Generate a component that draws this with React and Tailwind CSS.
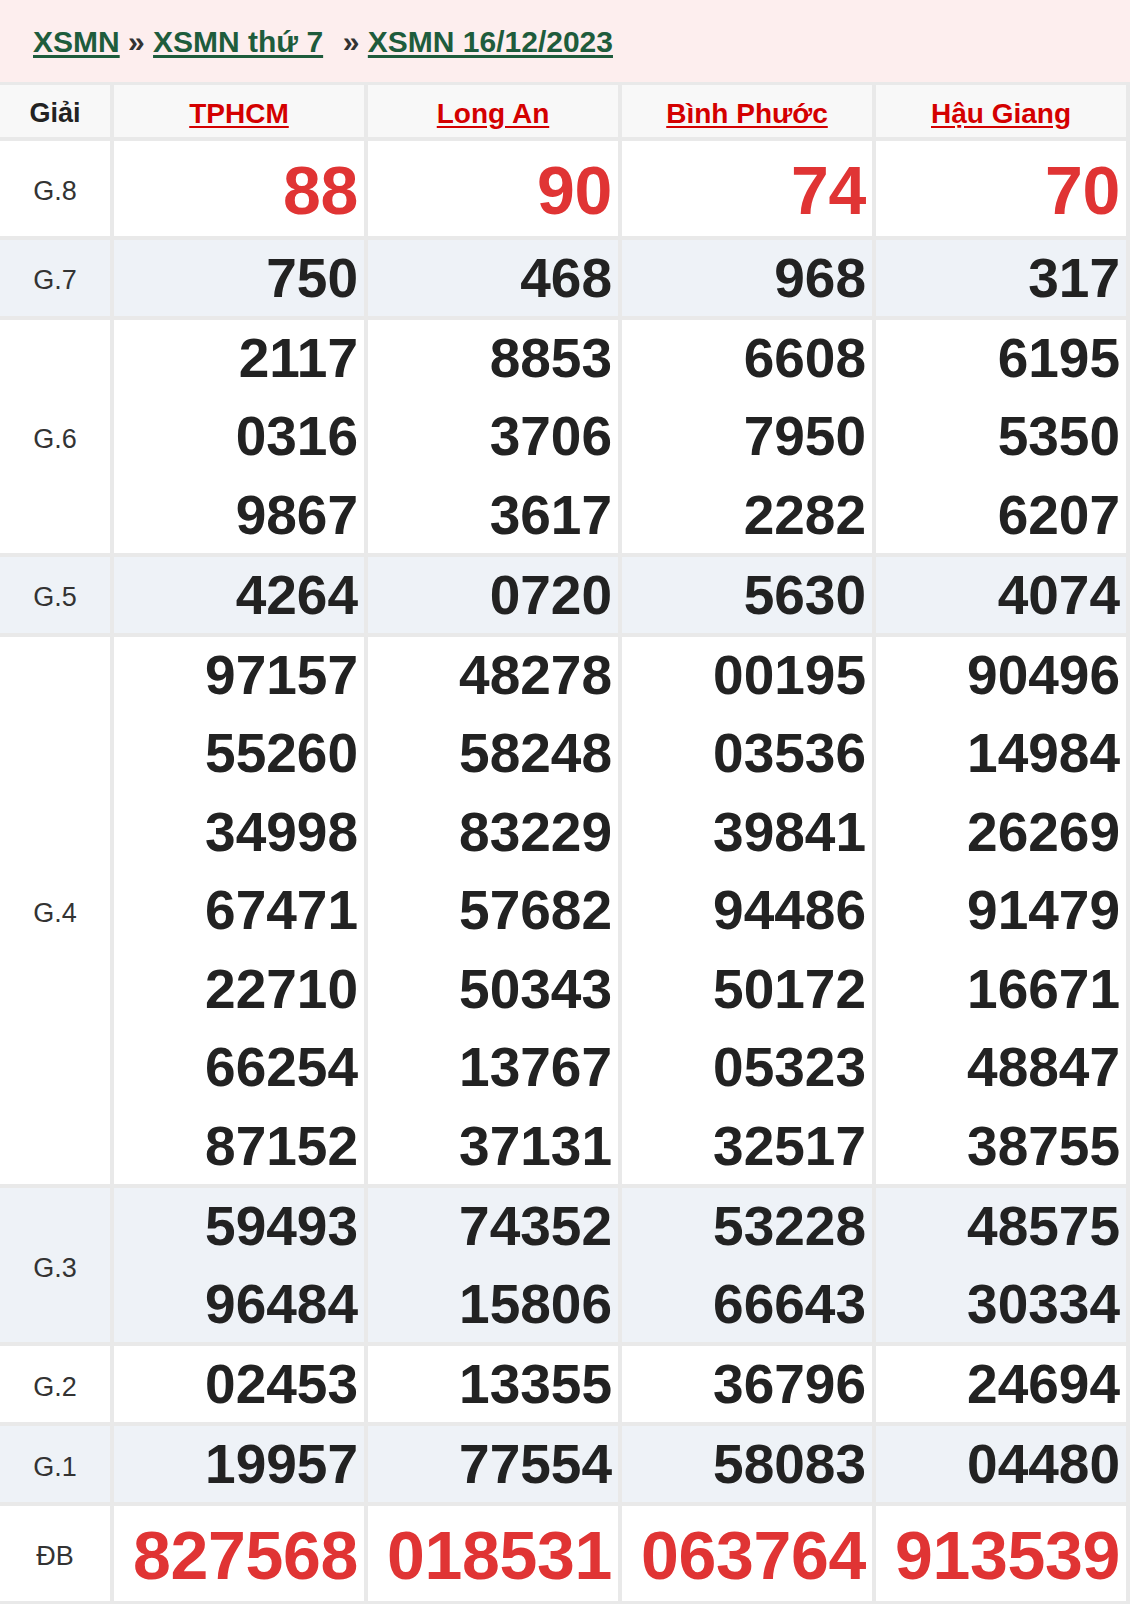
import React from "react";

const provinces = ["TPHCM", "Long An", "Bình Phước", "Hậu Giang"];

const rows = [
  { label: "G.8", big: true, alt: false, values: [["88"], ["90"], ["74"], ["70"]] },
  { label: "G.7", alt: true, values: [["750"], ["468"], ["968"], ["317"]] },
  {
    label: "G.6",
    alt: false,
    values: [
      ["2117", "0316", "9867"],
      ["8853", "3706", "3617"],
      ["6608", "7950", "2282"],
      ["6195", "5350", "6207"],
    ],
  },
  { label: "G.5", alt: true, values: [["4264"], ["0720"], ["5630"], ["4074"]] },
  {
    label: "G.4",
    alt: false,
    values: [
      ["97157", "55260", "34998", "67471", "22710", "66254", "87152"],
      ["48278", "58248", "83229", "57682", "50343", "13767", "37131"],
      ["00195", "03536", "39841", "94486", "50172", "05323", "32517"],
      ["90496", "14984", "26269", "91479", "16671", "48847", "38755"],
    ],
  },
  {
    label: "G.3",
    alt: true,
    values: [
      ["59493", "96484"],
      ["74352", "15806"],
      ["53228", "66643"],
      ["48575", "30334"],
    ],
  },
  { label: "G.2", alt: false, values: [["02453"], ["13355"], ["36796"], ["24694"]] },
  { label: "G.1", alt: true, values: [["19957"], ["77554"], ["58083"], ["04480"]] },
  { label: "ĐB", big: true, alt: false, values: [["827568"], ["018531"], ["063764"], ["913539"]] },
];

export default function App() {
  return (
    <div className="w-[1130px] bg-white font-['Liberation_Sans',Arial,sans-serif]">
      {/* breadcrumb */}
      <div className="h-[82px] bg-[#fdeeee] flex items-center pl-[33px] text-[30px] font-bold whitespace-pre">
        <a href="#" className="text-[#1e5c3c] underline underline-offset-[3px]">XSMN</a>
        <span className="text-[#333]"> » </span>
        <a href="#" className="text-[#1e5c3c] underline underline-offset-[3px]">XSMN thứ 7</a>
        <span className="text-[#333] pl-[3px]">{"  » "}</span>
        <a href="#" className="text-[#1e5c3c] underline underline-offset-[3px]">XSMN 16/12/2023</a>
      </div>

      {/* results */}
      <div className="grid grid-cols-[110px_250px_250px_250px_250px] gap-[4px] pt-[3px] pr-[4px] pb-[4px] bg-[#e9e9e9]">
        <div className="h-[52px] pt-[5px] bg-[#f8f8f8] flex items-center justify-center text-[27px] font-bold text-[#222]">
          Giải
        </div>
        {provinces.map((p) => (
          <div key={p} className="h-[52px] pt-[5px] bg-[#f8f8f8] flex items-center justify-center">
            <a href="#" className="text-[28px] font-bold text-[#d40000] underline underline-offset-[3px]">
              {p}
            </a>
          </div>
        ))}

        {rows.map((r) => {
          const bg = r.alt ? "bg-[#eef2f7]" : "bg-white";
          return (
            <React.Fragment key={r.label}>
              <div className={`${bg} pt-[6px] flex items-center justify-center text-[27px] text-[#333]`}>
                {r.label}
              </div>
              {r.values.map((list, i) => (
                <div key={i} className={`${bg} flex flex-col gap-[2.5px] pr-[6px] text-right font-bold`}>
                  {list.map((n) =>
                    r.big ? (
                      <div key={n} className="pt-[4px] text-[68px] leading-[90.5px] text-[#e03434] tracking-[-0.3px]">
                        {n}
                      </div>
                    ) : (
                      <div key={n} className="text-[55px] leading-[76px] text-[#222]">
                        {n}
                      </div>
                    )
                  )}
                </div>
              ))}
            </React.Fragment>
          );
        })}
      </div>
    </div>
  );
}
